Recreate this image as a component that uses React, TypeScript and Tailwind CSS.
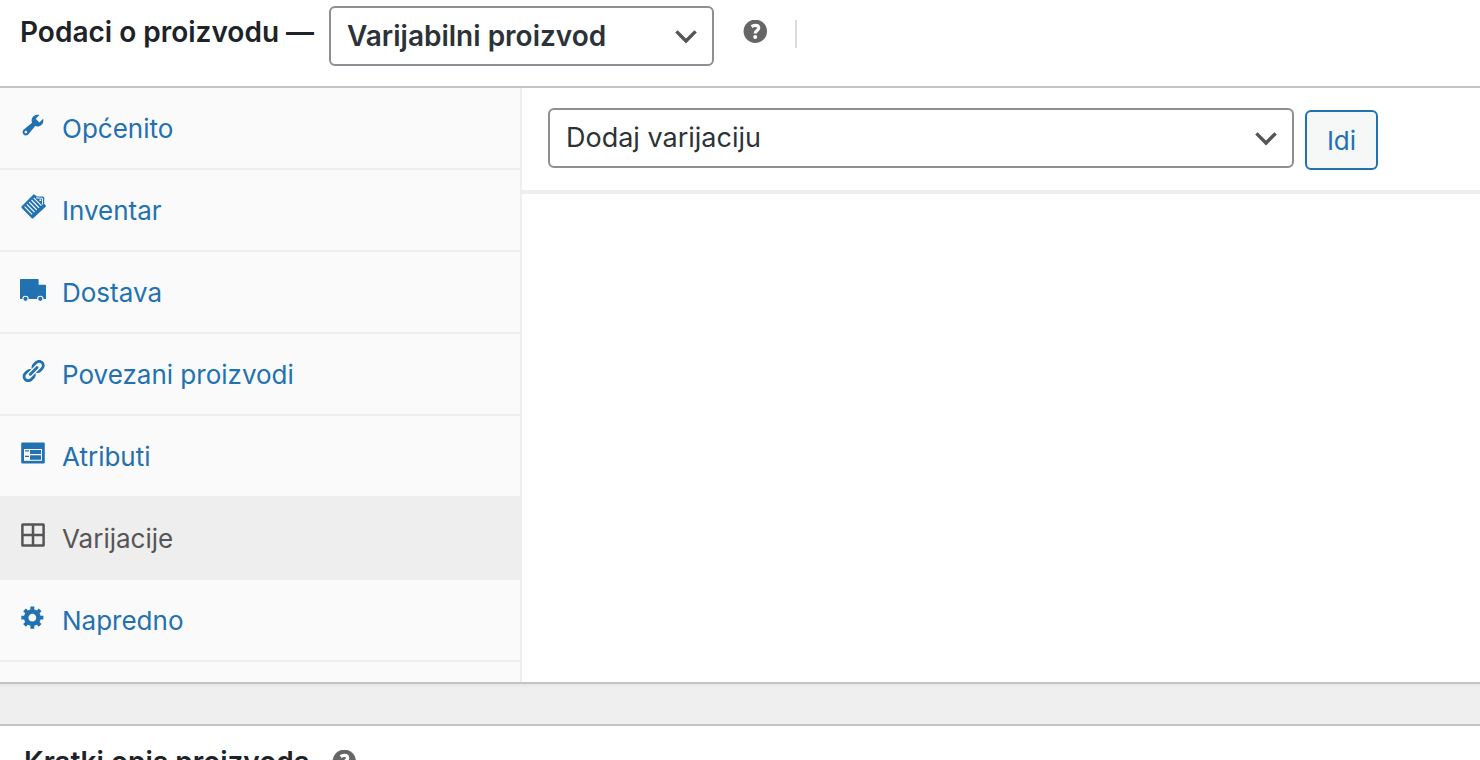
import { useState } from 'react';
import type { ReactNode } from 'react';

interface Tab {
  id: string;
  label: string;
  icon: ReactNode;
}

const tabs: Tab[] = [
  {
    id: 'general',
    label: 'Općenito',
    icon: (
      <svg viewBox="0 0 20 20" className="size-[26px] fill-current">
        <path d="M16.68 9.77c-1.34 1.34-3.3 1.67-4.95.99l-5.41 6.52c-.99.99-2.59.99-3.58 0s-.99-2.59 0-3.57l6.52-5.42c-.68-1.65-.35-3.61.99-4.95 1.28-1.28 3.12-1.62 4.72-1.06l-2.89 2.89 2.82 2.82 2.86-2.87c.53 1.58.18 3.39-1.08 4.65zM3.81 16.21c.4.39 1.04.39 1.43 0 .4-.4.4-1.04 0-1.43-.39-.4-1.03-.4-1.43 0-.39.39-.39 1.03 0 1.43z" />
      </svg>
    ),
  },
  {
    id: 'inventory',
    label: 'Inventar',
    icon: (
      <svg viewBox="0 0 26 26" className="size-[26px] fill-current">
        <path d="M1.7 12.2 13.2.7q.8-.7 1.6 0L17 2.4l6 .2q1.2.1 1.2 1.3v5.9l1.4 1.4q.7.8 0 1.6L13.3 24.3q-.8.7-1.6 0l-10-10.4q-.8-.9 0-1.7z" />
        <path
          d="M16.2 3.9l6.2.3.2 6.4"
          fill="none"
          stroke="#fafafa"
          strokeWidth="1"
        />
        <circle cx="20.3" cy="6.2" r=".9" fill="#fafafa" />
        <path
          d="M4.6 12.6l7.6 7.8M6.9 10.4l7.6 7.8M9.2 8.2l7.6 7.8M11.5 6l7.6 7.8M13.8 3.8l7.6 7.8"
          fill="none"
          stroke="#fafafa"
          strokeWidth="1.2"
        />
      </svg>
    ),
  },
  {
    id: 'shipping',
    label: 'Dostava',
    icon: (
      <svg viewBox="0 0 26 26" className="size-[26px] fill-current">
        <path d="M.8 3h17q.8 0 .8.8v4.9h6.6q.8 0 .8.8V23h-2.5a3.2 3.2 0 0 0-6.4 0H8.7a3.2 3.2 0 0 0-6.4 0H0V3.8Q0 3 .8 3z" />
        <circle cx="5.5" cy="22.8" r="2.1" />
        <circle cx="20.3" cy="22.8" r="2.1" />
      </svg>
    ),
  },
  {
    id: 'linked',
    label: 'Povezani proizvodi',
    icon: (
      <svg viewBox="0 0 20 20" className="size-[26px] fill-current">
        <path d="M17.74 2.76c1.68 1.69 1.68 4.41 0 6.1l-1.53 1.52c-1.12 1.12-2.7 1.47-4.14 1.09l2.62-2.61.76-.77.76-.76c.84-.84.84-2.2 0-3.04-.84-.85-2.2-.85-3.04 0l-.77.76-3.38 3.38c-.37-1.44-.02-3.02 1.1-4.14l1.52-1.53c1.69-1.68 4.42-1.68 6.1 0zM8.59 13.43l5.34-5.34c.42-.42.42-1.1 0-1.52-.44-.43-1.13-.39-1.53 0l-5.33 5.34c-.42.42-.42 1.1 0 1.52.44.43 1.13.39 1.52 0zm-.76 2.29l4.14-4.15c.38 1.44.03 3.02-1.09 4.14l-1.52 1.53c-1.69 1.68-4.41 1.68-6.1 0-1.68-1.68-1.68-4.42 0-6.1l1.53-1.52c1.12-1.12 2.7-1.47 4.14-1.1l-4.14 4.15c-.85.84-.85 2.2 0 3.05.84.84 2.2.84 3.04 0z" />
      </svg>
    ),
  },
  {
    id: 'attributes',
    label: 'Atributi',
    icon: (
      <svg viewBox="0 0 26 26" className="size-[26px] fill-current">
        <rect x="1.2" y="2.5" width="23.6" height="21" rx="1" />
        <rect x="4" y="9" width="18" height="11.8" fill="#fafafa" />
        <path d="M5 10.2h4v1.3H5zM5 15.8h4v1.3H5zM10 10h11v4H10zM10 15.3h11v4.4H10z" />
      </svg>
    ),
  },
  {
    id: 'variations',
    label: 'Varijacije',
    icon: (
      <svg
        viewBox="0 0 26 26"
        className="size-[26px] fill-none stroke-current"
        strokeWidth="2.5"
      >
        <rect x="2.4" y="2.4" width="21.2" height="21.2" rx=".4" />
        <path d="M13 2v22M2 13h22" />
      </svg>
    ),
  },
  {
    id: 'advanced',
    label: 'Napredno',
    icon: (
      <svg viewBox="0 0 20 20" className="size-[26px] fill-current">
        <path d="M18 12h-2.18c-.17.7-.44 1.35-.81 1.93l1.54 1.54-2.1 2.1-1.54-1.54c-.58.36-1.23.63-1.91.79V19H8v-2.18c-.68-.16-1.33-.43-1.91-.79l-1.54 1.54-2.12-2.12 1.54-1.54c-.36-.58-.63-1.23-.79-1.91H1V9.03h2.17c.16-.7.44-1.35.8-1.94L2.43 5.55l2.1-2.1 1.54 1.54c.58-.37 1.24-.64 1.93-.81V2h3v2.18c.68.16 1.33.43 1.91.79l1.54-1.54 2.12 2.12-1.54 1.54c.36.59.64 1.24.8 1.94H18V12zm-8.5 1.5c1.66 0 3-1.34 3-3s-1.34-3-3-3-3 1.34-3 3 1.34 3 3 3z" />
      </svg>
    ),
  },
];

function HelpTip() {
  return (
    <svg
      viewBox="0 0 24 24"
      className="size-6 shrink-0"
      role="img"
      aria-label="Pomoć"
    >
      <circle cx="12.3" cy="11.3" r="11.7" fill="#666" />
      <path
        d="M8.6 6.6c1.1-.8 2.3-1.2 3.7-1.2 2.2 0 3.4 1 3.4 2.7 0 2.6-3.5 2.5-3.5 5.3"
        fill="none"
        stroke="#fff"
        strokeWidth="3.2"
      />
      <circle cx="12.2" cy="17.1" r="2" fill="#fff" />
    </svg>
  );
}

function Chevron() {
  return (
    <svg
      viewBox="0 0 24 24"
      className="pointer-events-none col-start-1 row-start-1 mr-4 size-6 self-center justify-self-end fill-none stroke-[#555]"
      strokeWidth="3.4"
    >
      <path d="M2.4 7.4l9.6 9.6 9.6-9.6" />
    </svg>
  );
}

export default function App() {
  const [active, setActive] = useState('variations');

  return (
    <div className="min-h-screen overflow-hidden bg-[#efefef] font-[Inter,'Liberation_Sans',sans-serif] text-[#1d2327]">
      <section className="border-b-2 border-[#c3c4c7] bg-white shadow-[0_2px_2px_rgba(0,0,0,0.04)]">
        <header className="flex h-[88px] items-start border-b-2 border-[#c3c4c7] pt-1.5 pl-5">
          <label
            htmlFor="product-type"
            className="w-[309px] shrink-0 pt-2 text-[28px] leading-9 font-semibold whitespace-nowrap"
          >
            Podaci o proizvodu —
          </label>
          <div className="grid w-[385px] shrink-0">
            <select
              id="product-type"
              className="col-start-1 row-start-1 h-[60px] appearance-none rounded-md border-2 border-[#8c8f94] bg-white pr-12 pl-4 text-[28px] leading-9 font-semibold text-[#2c3338]"
            >
              <option>Varijabilni proizvod</option>
            </select>
            <Chevron />
          </div>
          <div className="flex items-start pt-3.5 pl-[29px]">
            <HelpTip />
            <span className="ml-7 h-7 w-0.5 bg-[#dcdcde]" />
          </div>
        </header>

        <div className="flex">
          <ul className="w-[522px] shrink-0 border-r-2 border-[#eee] bg-[#fafafa] pb-5">
            {tabs.map((tab) => (
              <li key={tab.id}>
                <a
                  href={`#${tab.id}`}
                  onClick={() => setActive(tab.id)}
                  className={`flex h-[82px] items-start border-b-2 border-[#eee] pt-6 pl-5 text-[26px] leading-[34px] ${
                    active === tab.id
                      ? 'bg-[#eee] text-[#555]'
                      : 'text-[#2271b1]'
                  }`}
                >
                  {tab.icon}
                  <span className="pl-4">{tab.label}</span>
                </a>
              </li>
            ))}
          </ul>

          <div className="min-w-0 flex-1">
            <div className="flex items-start border-b-4 border-[#eee] pt-5 pr-[102px] pb-[22px] pl-[26px]">
              <div className="grid min-w-0 flex-1">
                <select
                  aria-label="Radnja za varijacije"
                  className="col-start-1 row-start-1 h-[60px] appearance-none rounded-md border-2 border-[#8c8f94] bg-white pr-12 pl-4 text-[27px] leading-9 text-[#2c3338]"
                >
                  <option>Dodaj varijaciju</option>
                </select>
                <Chevron />
              </div>
              <button
                type="button"
                className="-mb-0.5 mt-0.5 ml-[11px] h-[60px] w-[73px] rounded-md border-2 border-[#2271b1] bg-[#f6f7f7] text-[26px] text-[#2271b1]"
              >
                Idi
              </button>
            </div>
          </div>
        </div>
      </section>

      <section className="mt-10 h-9 overflow-hidden border-t-2 border-[#c3c4c7] bg-white">
        <div className="flex items-start pt-4 pl-6">
          <h2 className="pt-0.5 text-[28px] leading-9 font-semibold">
            Kratki opis proizvoda
          </h2>
          <div className="pt-2 pl-[22px]">
            <HelpTip />
          </div>
        </div>
      </section>
    </div>
  );
}
